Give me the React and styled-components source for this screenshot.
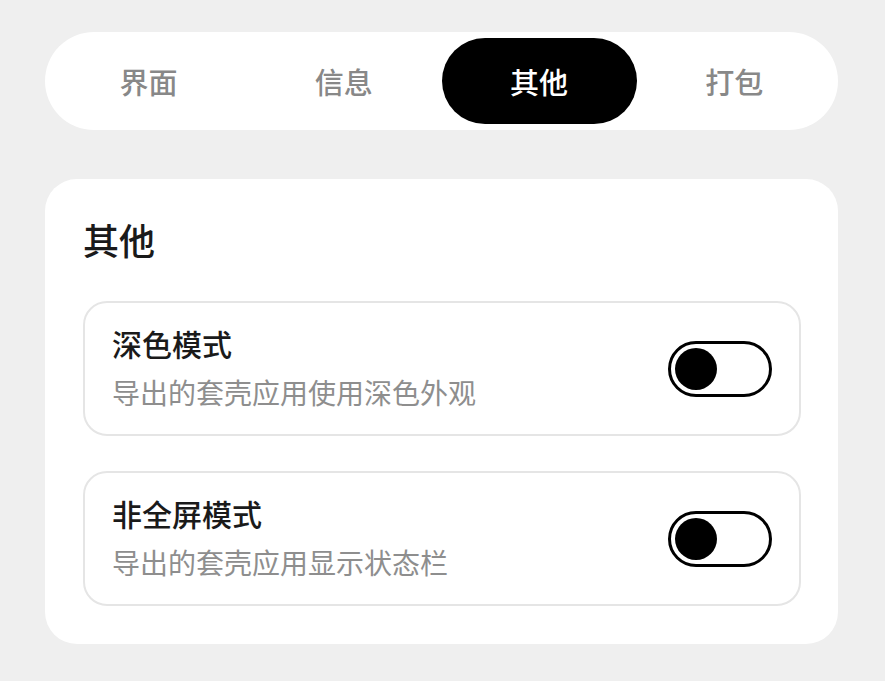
import React, { useState } from "react"
import styled, { createGlobalStyle } from "styled-components"

const GlobalStyle = createGlobalStyle`
  html, body {
    margin: 0;
    padding: 0;
    background: #efefef;
    font-family: "Noto Sans CJK SC", "Noto Sans", sans-serif;
  }
`

const tabs = ["界面", "信息", "其他", "打包"]

const settings = [
  { title: "深色模式", desc: "导出的套壳应用使用深色外观" },
  { title: "非全屏模式", desc: "导出的套壳应用显示状态栏" },
]

const App = () => {
  const [active, setActive] = useState(2)
  const [values, setValues] = useState([false, false])

  return (
    <Page>
      <GlobalStyle />
      <TabBar>
        {tabs.map((t, i) => (
          <Tab key={t} $active={i === active} onClick={() => setActive(i)}>
            {t}
          </Tab>
        ))}
      </TabBar>
      <Card>
        <CardTitle>其他</CardTitle>
        <Rows>
          {settings.map((s, i) => (
            <Row key={s.title}>
              <RowText>
                <RowTitle>{s.title}</RowTitle>
                <RowDesc>{s.desc}</RowDesc>
              </RowText>
              <Toggle
                $on={values[i]}
                onClick={() =>
                  setValues(values.map((v, j) => (j === i ? !v : v)))
                }
              >
                <Knob $on={values[i]} />
              </Toggle>
            </Row>
          ))}
        </Rows>
      </Card>
    </Page>
  )
}

export default App

const Page = styled.div`
  padding: 32px 47px 0 45px;
`

const TabBar = styled.div`
  display: grid;
  grid-template-columns: repeat(4, 1fr);
  padding: 6px;
  background: #fff;
  border-radius: 49px;
`

const Tab = styled.button`
  height: 86px;
  border: none;
  border-radius: 43px;
  background: ${(p) => (p.$active ? "#000" : "transparent")};
  color: ${(p) => (p.$active ? "#fff" : "#888")};
  font-family: inherit;
  font-size: 29px;
  font-weight: 500;
  cursor: pointer;
  padding: 0;
`

const Card = styled.section`
  margin-top: 49px;
  background: #fff;
  border-radius: 32px;
  padding: 38px 37px 38px 38px;
`

const CardTitle = styled.h2`
  margin: 0 0 40px 0;
  font-size: 36px;
  line-height: 44px;
  font-weight: 500;
  color: #1a1a1a;
`

const Rows = styled.div`
  display: flex;
  flex-direction: column;
  gap: 35px;
`

const Row = styled.div`
  display: flex;
  align-items: center;
  justify-content: space-between;
  height: 135px;
  box-sizing: border-box;
  border: 2px solid #e5e5e5;
  border-radius: 24px;
  padding: 0 27px 0 27px;
  flex-shrink: 0;
`

const RowText = styled.div`
  display: flex;
  flex-direction: column;
  gap: 14px;
  margin-top: -4px;
`

const RowTitle = styled.div`
  font-size: 30px;
  line-height: 36px;
  font-weight: 500;
  color: #1a1a1a;
`

const RowDesc = styled.div`
  font-size: 28px;
  line-height: 34px;
  color: #8e8e8e;
`

const Toggle = styled.button`
  position: relative;
  width: 104px;
  height: 56px;
  box-sizing: border-box;
  border: 3px solid #000;
  border-radius: 28px;
  background: #fff;
  padding: 0;
  cursor: pointer;
`

const Knob = styled.span`
  position: absolute;
  top: 4px;
  left: ${(p) => (p.$on ? "54px" : "4px")};
  width: 42px;
  height: 42px;
  border-radius: 50%;
  background: #000;
`
